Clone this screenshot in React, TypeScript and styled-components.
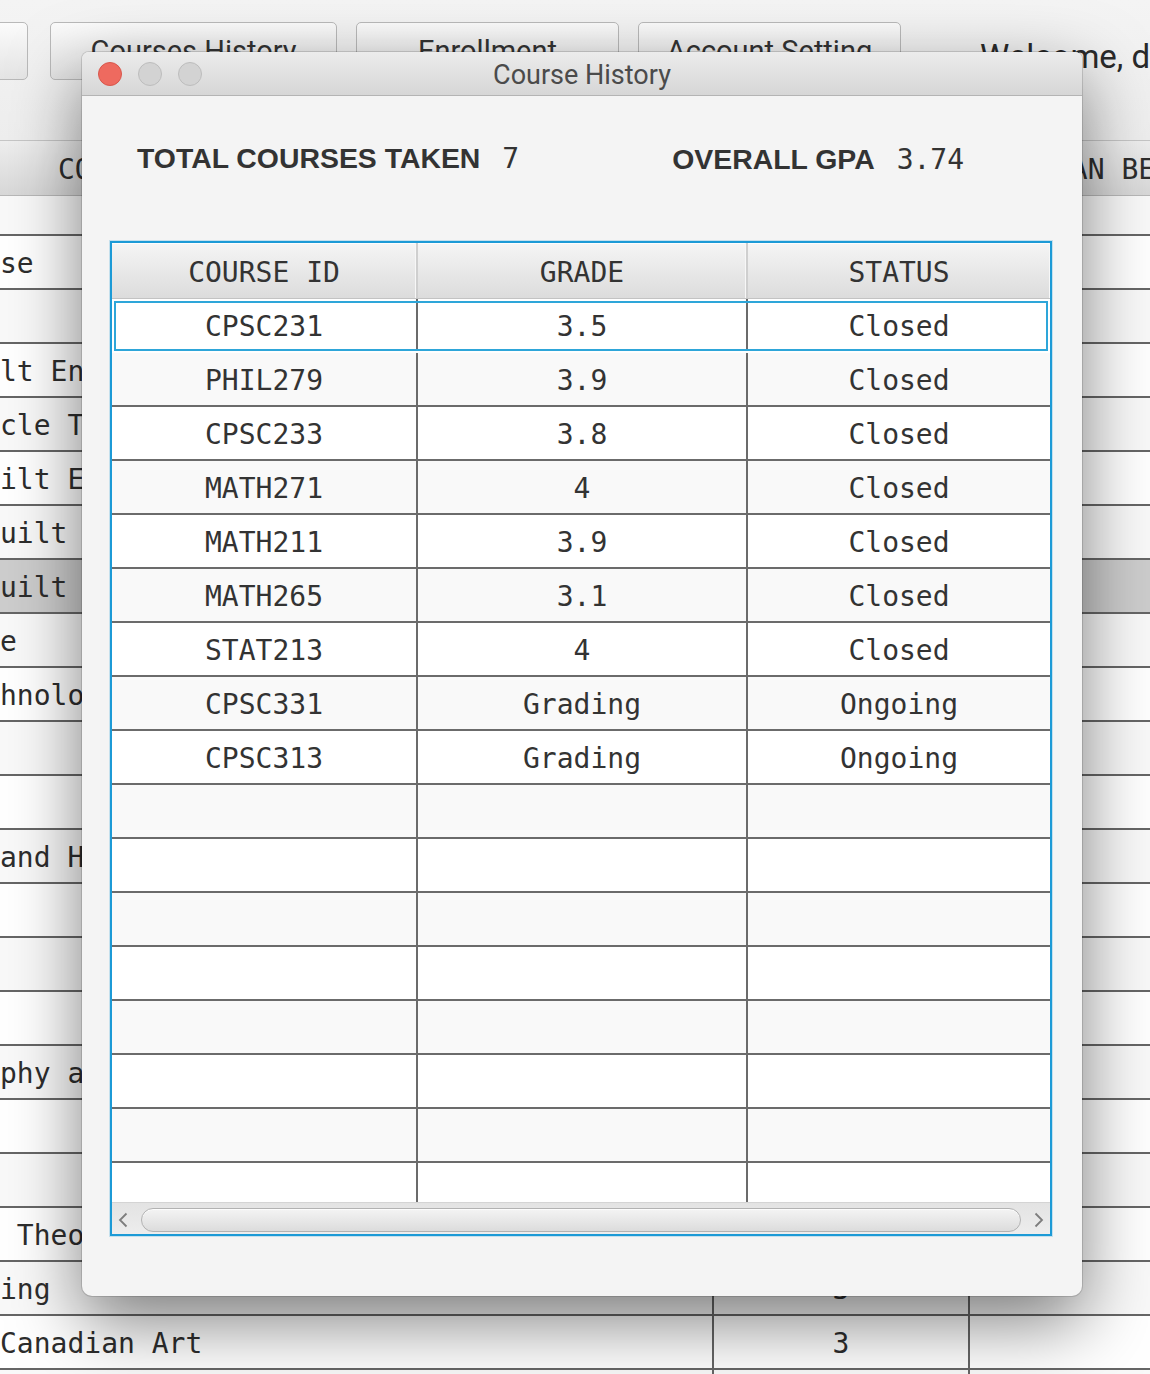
import React from "react";
import styled, { createGlobalStyle } from "styled-components";

const GlobalStyle = createGlobalStyle`
  html, body { margin: 0; padding: 0; background: #f1f1f1; }
  body { overflow: hidden; }
`;

const Page = styled.div`
  position: relative;
  width: 1150px;
  height: 1374px;
  overflow: hidden;
  background: #f1f1f1;
  font-family: "Roboto", "Liberation Sans", sans-serif;
`;

/* ---------- background application ---------- */

const Toolbar = styled.div`
  display: flex;
  align-items: flex-start;
  height: 140px;
  padding-top: 22px;
  box-sizing: border-box;
  background: linear-gradient(#f4f4f4, #eeeeee);
`;

const ToolButton = styled.button<{ $w: number; $before: number }>`
  flex: none;
  width: ${(p) => p.$w}px;
  height: 58px;
  margin-left: ${(p) => p.$before}px;
  border: 1px solid #b9b9b9;
  border-radius: 5px;
  background: linear-gradient(#fbfbfb, #e4e4e4);
  font-family: "Roboto", "Liberation Sans", sans-serif;
  font-size: 29px;
  color: #333;
  padding: 0;
`;

const Welcome = styled.div`
  margin-left: 79px;
  margin-top: 15px;
  font-size: 33px;
  color: #2a2a2a;
  white-space: nowrap;
`;

const BgGrid = styled.div`
  display: flex;
  flex-direction: column;
`;

const bgColumns = "714px 256px 1fr";

const BgHeader = styled.div`
  display: grid;
  grid-template-columns: ${bgColumns};
  height: 56px;
  box-sizing: border-box;
  border-top: 1px solid #c6c6c6;
  border-bottom: 1px solid #b8b8b8;
  background: linear-gradient(#eeeeee, #d8d8d8);
  font-family: "DejaVu Sans Mono", monospace;
  font-size: 28px;
  color: #2d2d2d;
`;

const BgHeadCell = styled.div<{ $pad: number }>`
  display: flex;
  align-items: center;
  padding-left: ${(p) => p.$pad}px;
  padding-top: 3px;
  white-space: pre;
  overflow: hidden;
`;

const BgRow = styled.div<{ $h: number; $tone: "a" | "b" | "sel" }>`
  display: grid;
  grid-template-columns: ${bgColumns};
  height: ${(p) => p.$h}px;
  flex: none;
  box-sizing: border-box;
  border-bottom: 2px solid #666666;
  background: ${(p) =>
    p.$tone === "sel" ? "#cdcdcd" : p.$tone === "a" ? "#ffffff" : "#f9f9f9"};
  font-family: "DejaVu Sans Mono", monospace;
  font-size: 28px;
  color: #2d2d2d;
`;

const BgCell = styled.div<{ $center?: boolean; $line?: boolean }>`
  display: flex;
  align-items: center;
  justify-content: ${(p) => (p.$center ? "center" : "flex-start")};
  padding-top: 3px;
  border-right: ${(p) => (p.$line ? "2px solid #666666" : "none")};
  white-space: pre;
  overflow: hidden;
`;

/* ---------- dialog ---------- */

const Dialog = styled.section`
  position: absolute;
  left: 82px;
  top: 52px;
  width: 1000px;
  height: 1244px;
  display: flex;
  flex-direction: column;
  background: #f4f4f4;
  border-radius: 7px 7px 10px 10px;
  box-shadow: 0 0 0 1px rgba(0, 0, 0, 0.13), 0 26px 70px rgba(0, 0, 0, 0.5);
  overflow: hidden;
`;

const TitleBar = styled.header`
  flex: none;
  height: 44px;
  box-sizing: border-box;
  display: grid;
  grid-template-columns: 1fr auto 1fr;
  align-items: center;
  background: linear-gradient(#ececec, #d6d6d6);
  border-bottom: 1px solid #b4b4b4;
`;

const Lights = styled.div`
  display: flex;
  gap: 16px;
  padding-left: 16px;
`;

const Light = styled.span<{ $color: string; $edge: string }>`
  width: 24px;
  height: 24px;
  box-sizing: border-box;
  border-radius: 50%;
  background: ${(p) => p.$color};
  border: 1px solid ${(p) => p.$edge};
`;

const Title = styled.h1`
  margin: 2px 0 0;
  font-family: "Roboto", "Liberation Sans", sans-serif;
  font-weight: 400;
  font-size: 27px;
  color: #4b4b4b;
`;

const Body = styled.div`
  flex: 1;
  min-height: 0;
  display: flex;
  flex-direction: column;
  padding: 44px 30px 60px 28px;
`;

const Stats = styled.div`
  flex: none;
  height: 36px;
  display: flex;
  align-items: center;
  gap: 153px;
  padding-left: 27px;
`;

const Stat = styled.div<{ $drop: number }>`
  display: flex;
  align-items: center;
  gap: 22px;
  margin-top: ${(p) => p.$drop}px;
`;

const StatLabel = styled.span`
  font-family: "Liberation Sans", "Arial", sans-serif;
  font-weight: 700;
  font-size: 28.4px;
  color: #333;
`;

const StatValue = styled.span`
  font-family: "DejaVu Sans Mono", monospace;
  font-size: 28px;
  color: #333;
`;

const Table = styled.div`
  flex: 1;
  min-height: 0;
  margin-top: 65px;
  display: flex;
  flex-direction: column;
  border: 2px solid #1c9ad6;
  box-shadow: 0 0 0 1px rgba(28, 154, 214, 0.22);
  background: #ffffff;
  overflow: hidden;
`;

const columns = "306px 330px 1fr";

const HeadRow = styled.div`
  flex: none;
  height: 56px;
  box-sizing: border-box;
  display: grid;
  grid-template-columns: ${columns};
  background: linear-gradient(#f5f5f5, #dcdcdc);
  border-bottom: 1px solid #c3c3c3;
  box-shadow: inset 0 1px #fdfdfd;
`;

const HeadCell = styled.div<{ $last?: boolean }>`
  display: flex;
  align-items: center;
  justify-content: center;
  padding-top: 4px;
  font-family: "DejaVu Sans Mono", monospace;
  font-size: 28px;
  color: #333;
  border-right: ${(p) => (p.$last ? "none" : "2px solid #cfcfcf")};
  box-shadow: inset -1px 0 #f7f7f7;
`;

const Rows = styled.div`
  flex: 1;
  min-height: 0;
  overflow: hidden;
  display: flex;
  flex-direction: column;
`;

const Row = styled.div<{ $odd: boolean; $focus?: boolean }>`
  flex: none;
  height: 54px;
  box-sizing: border-box;
  display: grid;
  grid-template-columns: ${columns};
  background: ${(p) => (p.$odd ? "#ffffff" : "#f9f9f9")};
  border-bottom: 2px solid ${(p) => (p.$focus ? "#ffffff" : "#6b6b6b")};
  outline: ${(p) => (p.$focus ? "2px solid #2ea6d9" : "none")};
  outline-offset: -4px;
`;

const Cell = styled.div<{ $last?: boolean }>`
  display: flex;
  align-items: center;
  justify-content: center;
  padding-top: 2px;
  font-family: "DejaVu Sans Mono", monospace;
  font-size: 28px;
  color: #333;
  border-right: ${(p) => (p.$last ? "none" : "2px solid #6b6b6b")};
`;

const HScroll = styled.div`
  flex: none;
  height: 32px;
  box-sizing: border-box;
  display: flex;
  align-items: center;
  gap: 13px;
  padding: 0 6px;
  background: linear-gradient(#e3e3e3, #ededed);
  border-top: 1px solid #d4d4d4;
`;

const Thumb = styled.div`
  flex: 1;
  height: 24px;
  box-sizing: border-box;
  margin-top: 2px;
  border: 1px solid #b2b2b2;
  border-radius: 12px;
  background: linear-gradient(#f4f4f4, #dcdcdc);
  box-shadow: inset 0 1px #fcfcfc;
`;

const ArrowIcon = styled.svg`
  flex: none;
  width: 10px;
  height: 16px;
  margin-top: 2px;
`;

const Arrow = ({ dir }: { dir: "left" | "right" }) => (
  <ArrowIcon viewBox="0 0 10 16">
    <polyline
      points={dir === "left" ? "8.5,1.5 2,8 8.5,14.5" : "1.5,1.5 8,8 1.5,14.5"}
      fill="none"
      stroke="#7d7d7d"
      strokeWidth="1.8"
    />
  </ArrowIcon>
);

const courses = [
  ["CPSC231", "3.5", "Closed"],
  ["PHIL279", "3.9", "Closed"],
  ["CPSC233", "3.8", "Closed"],
  ["MATH271", "4", "Closed"],
  ["MATH211", "3.9", "Closed"],
  ["MATH265", "3.1", "Closed"],
  ["STAT213", "4", "Closed"],
  ["CPSC331", "Grading", "Ongoing"],
  ["CPSC313", "Grading", "Ongoing"],
];

const bgRows: { name: string; credits: string; sel?: boolean }[] = [
  { name: "", credits: "" },
  { name: "se", credits: "3" },
  { name: "", credits: "" },
  { name: "lt En", credits: "3" },
  { name: "cle T", credits: "3" },
  { name: "ilt E", credits: "3" },
  { name: "uilt", credits: "3" },
  { name: "uilt", credits: "3", sel: true },
  { name: "e", credits: "3" },
  { name: "hnolo", credits: "3" },
  { name: "", credits: "" },
  { name: "", credits: "" },
  { name: "and H", credits: "3" },
  { name: "", credits: "" },
  { name: "", credits: "" },
  { name: "", credits: "" },
  { name: "phy a", credits: "3" },
  { name: "", credits: "" },
  { name: "", credits: "" },
  { name: " Theo", credits: "3" },
  { name: "ing", credits: "3" },
  { name: "Canadian Art", credits: "3" },
  { name: "", credits: "" },
];

export default function App() {
  const totalRows = 17;
  const rows = Array.from({ length: totalRows }, (_, i) => courses[i] ?? ["", "", ""]);
  return (
    <Page>
      <GlobalStyle />
      <Toolbar>
        <ToolButton $w={263} $before={-235}>Courses</ToolButton>
        <ToolButton $w={287} $before={22}>Courses History</ToolButton>
        <ToolButton $w={263} $before={19}>Enrollment</ToolButton>
        <ToolButton $w={263} $before={19}>Account Setting</ToolButton>
        <Welcome>Welcome, demo</Welcome>
      </Toolbar>
      <BgGrid>
        <BgHeader>
          <BgHeadCell $pad={58}>COURSE NAME</BgHeadCell>
          <BgHeadCell $pad={60}>CREDITS</BgHeadCell>
          <BgHeadCell $pad={84}>CAN BE TAKEN</BgHeadCell>
        </BgHeader>
        {bgRows.map((r, i) => (
          <BgRow key={i} $h={i === 0 ? 40 : 54} $tone={r.sel ? "sel" : i % 2 ? "a" : "b"}>
            <BgCell $line>{r.name}</BgCell>
            <BgCell $line $center>{r.credits}</BgCell>
            <BgCell />
          </BgRow>
        ))}
      </BgGrid>

      <Dialog>
        <TitleBar>
          <Lights>
            <Light $color="#ee6a5f" $edge="#d8574c" />
            <Light $color="#d3d3d3" $edge="#bdbdbd" />
            <Light $color="#d3d3d3" $edge="#bdbdbd" />
          </Lights>
          <Title>Course History</Title>
          <span />
        </TitleBar>
        <Body>
          <Stats>
            <Stat $drop={0}>
              <StatLabel>TOTAL COURSES TAKEN</StatLabel>
              <StatValue>7</StatValue>
            </Stat>
            <Stat $drop={3}>
              <StatLabel>OVERALL GPA</StatLabel>
              <StatValue>3.74</StatValue>
            </Stat>
          </Stats>
          <Table>
            <HeadRow>
              <HeadCell>COURSE ID</HeadCell>
              <HeadCell>GRADE</HeadCell>
              <HeadCell $last>STATUS</HeadCell>
            </HeadRow>
            <Rows>
              {rows.map((r, i) => (
                <Row key={i} $odd={i % 2 === 0} $focus={i === 0}>
                  <Cell>{r[0]}</Cell>
                  <Cell>{r[1]}</Cell>
                  <Cell $last>{r[2]}</Cell>
                </Row>
              ))}
            </Rows>
            <HScroll>
              <Arrow dir="left" />
              <Thumb />
              <Arrow dir="right" />
            </HScroll>
          </Table>
        </Body>
      </Dialog>
    </Page>
  );
}
